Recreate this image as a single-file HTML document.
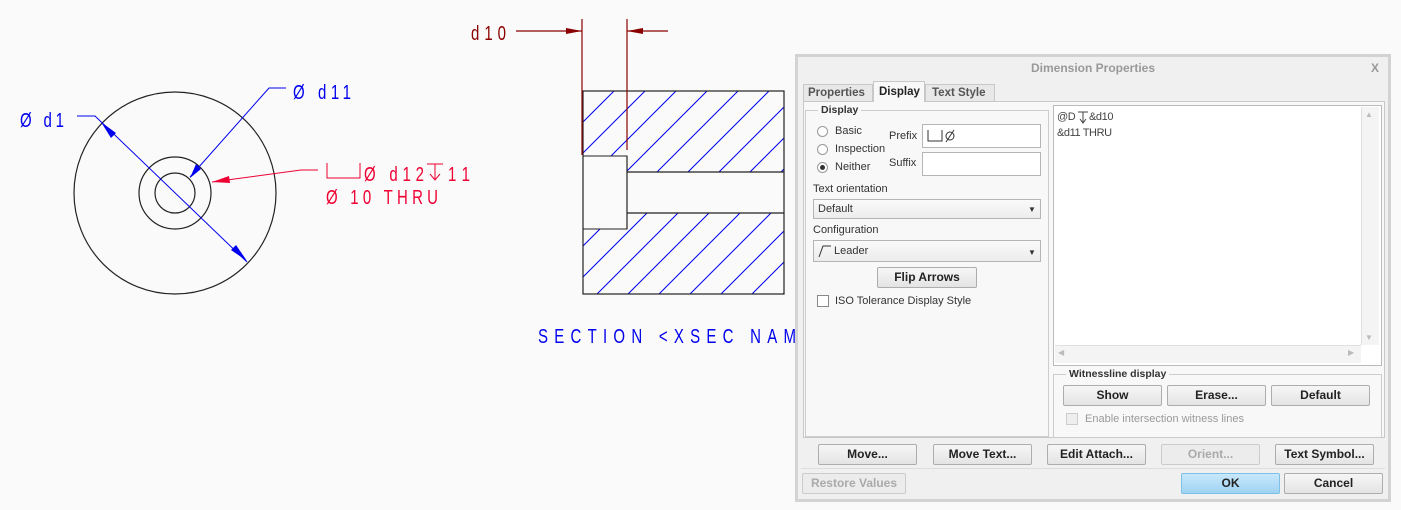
<!DOCTYPE html>
<html><head><meta charset="utf-8"><style>
body{margin:0;width:1401px;height:510px;background:#fafafa;position:relative;overflow:hidden;font-family:"Liberation Sans","DejaVu Sans",sans-serif;}
.a{position:absolute;box-sizing:border-box}
.btn{position:absolute;box-sizing:border-box;border:1px solid #adadad;border-radius:2px;background:linear-gradient(#f6f6f6,#e4e4e4);font-size:12px;font-weight:bold;color:#222;text-align:center;line-height:18px}
.lbl{position:absolute;font-size:11px;color:#333;white-space:nowrap}
.radio{position:absolute;width:11px;height:11px;border:1px solid #999;border-radius:50%;background:#fff;box-sizing:border-box}
.inp{position:absolute;background:#fff;border:1px solid #b5b5b5;box-sizing:border-box}
</style></head><body>
<svg class="a" style="left:0;top:0" width="800" height="360">
<defs>
<pattern id="h" patternUnits="userSpaceOnUse" width="31" height="31" x="583" y="91"><path d="M-1,32 L32,-1 M-1,1 L1,-1 M30,32 L32,30" stroke="#0000ee" stroke-width="1"/></pattern>
</defs>
<g fill="none" stroke="#222" stroke-width="1.2">
<circle cx="175" cy="193" r="101"/><circle cx="175" cy="193" r="36"/><circle cx="175" cy="193" r="20"/>
</g>
<g stroke="#0000ee" stroke-width="1" fill="none">
<path d="M77,116 L95,116 L247,262"/>
<path d="M286,88 L269,88 L190,177"/>
</g>
<g fill="#0000ee"><path d="M101,122 L116,133 L111,138 Z"/><path d="M247,261 L231,250 L236,245 Z"/><path d="M190,178 L196,164 L201,169 Z"/></g>
<path d="M318,170 L301,170 L212,182" stroke="#ee0033" fill="none"/>
<path d="M212,182 L229,176 L230,183 Z" fill="#ee0033"/>
<g font-family="Liberation Sans,sans-serif" font-size="15" fill="#0000ee">
<text transform="translate(20,127) scale(1,1.35)" textLength="44" lengthAdjust="spacing">Ø d1</text>
<text transform="translate(293,99) scale(1,1.35)" textLength="58" lengthAdjust="spacing">Ø d11</text>
<text transform="translate(538,343) scale(1,1.35)" textLength="258" lengthAdjust="spacing">SECTION  &lt;XSEC NAM</text>
</g>
<g font-family="Liberation Sans,sans-serif" font-size="15" fill="#ee0033" stroke="none">
<path d="M327,163 L327,178 L360,178 L360,163" stroke="#ee0033" fill="none"/>
<text transform="translate(364,181) scale(1,1.35)" textLength="60" lengthAdjust="spacing">Ø d12</text>
<path d="M427,164 L443,164 M435,164 L435,180 M430,174 L435,180 L440,174" stroke="#ee0033" fill="none"/>
<text transform="translate(448,181) scale(1,1.35)" textLength="22" lengthAdjust="spacing">11</text>
<text transform="translate(326,204) scale(1,1.35)" textLength="112" lengthAdjust="spacing">Ø 10 THRU</text>
</g>
<rect x="583" y="91" width="201" height="203" fill="url(#h)"/>
<rect x="583" y="156" width="44" height="73" fill="#fafafa" stroke="#222"/>
<rect x="627" y="172" width="157" height="41" fill="#fafafa"/>
<g stroke="#222" stroke-width="1.2" fill="none">
<rect x="583" y="91" width="201" height="203"/>
<path d="M627,172 L784,172 M627,213 L784,213 M627,156 L627,229"/>
</g>
<g stroke="#8b0000" stroke-width="1.2" fill="none">
<path d="M582,19 L582,155 M627,19 L627,150 M516,31 L582,31 M627,31 L668,31"/>
</g>
<path d="M582,31 L566,28 L566,34 Z M627,31 L643,28 L643,34 Z" fill="#8b0000"/>
<text transform="translate(471,40) scale(1,1.35)" font-size="15" fill="#8b0000" textLength="35" lengthAdjust="spacing">d10</text>
</svg>

<!-- dialog -->
<div class="a" style="left:795px;top:54px;width:596px;height:448px;background:#d3d3d3"></div>
<div class="a" style="left:798px;top:57px;width:590px;height:442px;background:#f0f0f0"></div>
<div class="lbl" style="left:798px;top:61px;width:590px;text-align:center;font-weight:bold;color:#999;font-size:12px">Dimension Properties</div>
<div class="lbl" style="left:1371px;top:61px;font-weight:bold;color:#999;font-size:12px">X</div>
<div class="a" style="left:803px;top:101px;width:582px;height:337px;border:1px solid #c8c8c8;background:#f8f8f8"></div>
<div class="a" style="left:803px;top:84px;width:70px;height:18px;border:1px solid #c8c8c8;background:#e8e8e8"></div>
<div class="lbl" style="left:808px;top:87px;font-weight:bold;color:#555;font-size:11.5px">Properties</div>
<div class="a" style="left:873px;top:81px;width:52px;height:21px;border:1px solid #c8c8c8;border-bottom:none;background:#f8f8f8"></div>
<div class="lbl" style="left:879px;top:86px;font-weight:bold;color:#222;font-size:11.5px">Display</div>
<div class="a" style="left:925px;top:84px;width:70px;height:18px;border:1px solid #c8c8c8;background:#e8e8e8"></div>
<div class="lbl" style="left:932px;top:87px;font-weight:bold;color:#555;font-size:11.5px">Text Style</div>

<div class="a" style="left:805px;top:110px;width:244px;height:327px;border:1px solid #ccc"></div>
<div class="lbl" style="left:818px;top:104px;background:#f8f8f8;padding:0 3px;font-weight:bold;font-size:10.5px">Display</div>
<div class="radio" style="left:817px;top:126px"></div><div class="lbl" style="left:835px;top:125px">Basic</div>
<div class="radio" style="left:817px;top:144px"></div><div class="lbl" style="left:835px;top:143px">Inspection</div>
<div class="radio" style="left:817px;top:162px"></div><div class="a" style="left:820px;top:165px;width:5px;height:5px;border-radius:50%;background:#333"></div><div class="lbl" style="left:835px;top:161px">Neither</div>
<div class="lbl" style="left:889px;top:130px">Prefix</div><div class="inp" style="left:922px;top:124px;width:119px;height:24px"></div>
<svg class="a" style="left:926px;top:128px" width="36" height="16"><path d="M2,2 L2,13 L16,13 L16,2" stroke="#333" fill="none"/><circle cx="24" cy="8" r="4" fill="none" stroke="#333"/><path d="M20,14 L28,2" stroke="#333"/></svg>
<div class="lbl" style="left:889px;top:157px">Suffix</div><div class="inp" style="left:922px;top:152px;width:119px;height:24px"></div>
<div class="lbl" style="left:813px;top:183px">Text orientation</div>
<div class="inp" style="left:813px;top:199px;width:228px;height:20px;background:linear-gradient(#fafafa,#ececec)"></div>
<div class="lbl" style="left:818px;top:203px">Default</div><div class="lbl" style="left:1028px;top:205px;font-size:8px">▼</div>
<div class="lbl" style="left:813px;top:224px">Configuration</div>
<div class="inp" style="left:813px;top:240px;width:228px;height:22px;background:linear-gradient(#fafafa,#ececec)"></div>
<svg class="a" style="left:817px;top:243px" width="20" height="16"><path d="M2,14 L6,3 L14,3" stroke="#333" fill="none"/></svg>
<div class="lbl" style="left:834px;top:245px">Leader</div><div class="lbl" style="left:1028px;top:248px;font-size:8px">▼</div>
<div class="btn" style="left:877px;top:267px;width:100px;height:21px">Flip Arrows</div>
<div class="a" style="left:817px;top:295px;width:12px;height:12px;border:1px solid #888;background:#fff"></div>
<div class="lbl" style="left:835px;top:295px">ISO Tolerance Display Style</div>

<div class="a" style="left:1053px;top:105px;width:329px;height:261px;border:1px solid #bbb;background:#fff"></div>
<div class="a" style="left:1361px;top:107px;width:18px;height:238px;background:#f4f4f4;border-left:1px solid #e0e0e0"></div>
<div class="lbl" style="left:1365px;top:110px;font-size:8px;color:#bbb">▲</div><div class="lbl" style="left:1365px;top:333px;font-size:8px;color:#bbb">▼</div>
<div class="a" style="left:1055px;top:345px;width:306px;height:18px;background:#f4f4f4;border-top:1px solid #e0e0e0"></div>
<div class="lbl" style="left:1058px;top:348px;font-size:8px;color:#bbb">◀</div><div class="lbl" style="left:1348px;top:348px;font-size:8px;color:#bbb">▶</div>
<div class="lbl" style="left:1057px;top:111px;color:#444;letter-spacing:-0.4px">@D</div>
<svg class="a" style="left:1077px;top:111px" width="12" height="13"><path d="M1,1 L11,1 M6,1 L6,12 M3,8 L6,12 L9,8" stroke="#444" fill="none"/></svg>
<div class="lbl" style="left:1089px;top:111px;color:#444;letter-spacing:-0.4px">&amp;d10</div>
<div class="lbl" style="left:1057px;top:127px;color:#444;letter-spacing:-0.4px">&amp;d11 THRU</div>

<div class="a" style="left:1053px;top:374px;width:329px;height:64px;border:1px solid #ccc"></div>
<div class="lbl" style="left:1066px;top:368px;background:#f8f8f8;padding:0 3px;font-size:10.5px;font-weight:bold">Witnessline display</div>
<div class="btn" style="left:1063px;top:385px;width:99px;height:21px">Show</div>
<div class="btn" style="left:1167px;top:385px;width:99px;height:21px">Erase...</div>
<div class="btn" style="left:1271px;top:385px;width:99px;height:21px">Default</div>
<div class="a" style="left:1066px;top:413px;width:12px;height:12px;border:1px solid #ccc;background:#eee"></div>
<div class="lbl" style="left:1085px;top:413px;color:#999">Enable intersection witness lines</div>

<div class="btn" style="left:818px;top:444px;width:99px;height:21px">Move...</div>
<div class="btn" style="left:933px;top:444px;width:99px;height:21px">Move Text...</div>
<div class="btn" style="left:1047px;top:444px;width:99px;height:21px">Edit Attach...</div>
<div class="btn" style="left:1161px;top:444px;width:99px;height:21px;color:#aaa;border-color:#ccc;background:#ececec">Orient...</div>
<div class="btn" style="left:1275px;top:444px;width:99px;height:21px">Text Symbol...</div>
<div class="a" style="left:801px;top:468px;width:584px;height:1px;background:#ddd"></div>
<div class="btn" style="left:802px;top:473px;width:104px;height:21px;color:#aaa;border-color:#ccc;background:#ececec">Restore Values</div>
<div class="btn" style="left:1181px;top:473px;width:99px;height:21px;border-color:#7cc0e8;background:linear-gradient(#c8e8fb,#9fd3f3)">OK</div>
<div class="btn" style="left:1284px;top:473px;width:99px;height:21px">Cancel</div>
</body></html>
